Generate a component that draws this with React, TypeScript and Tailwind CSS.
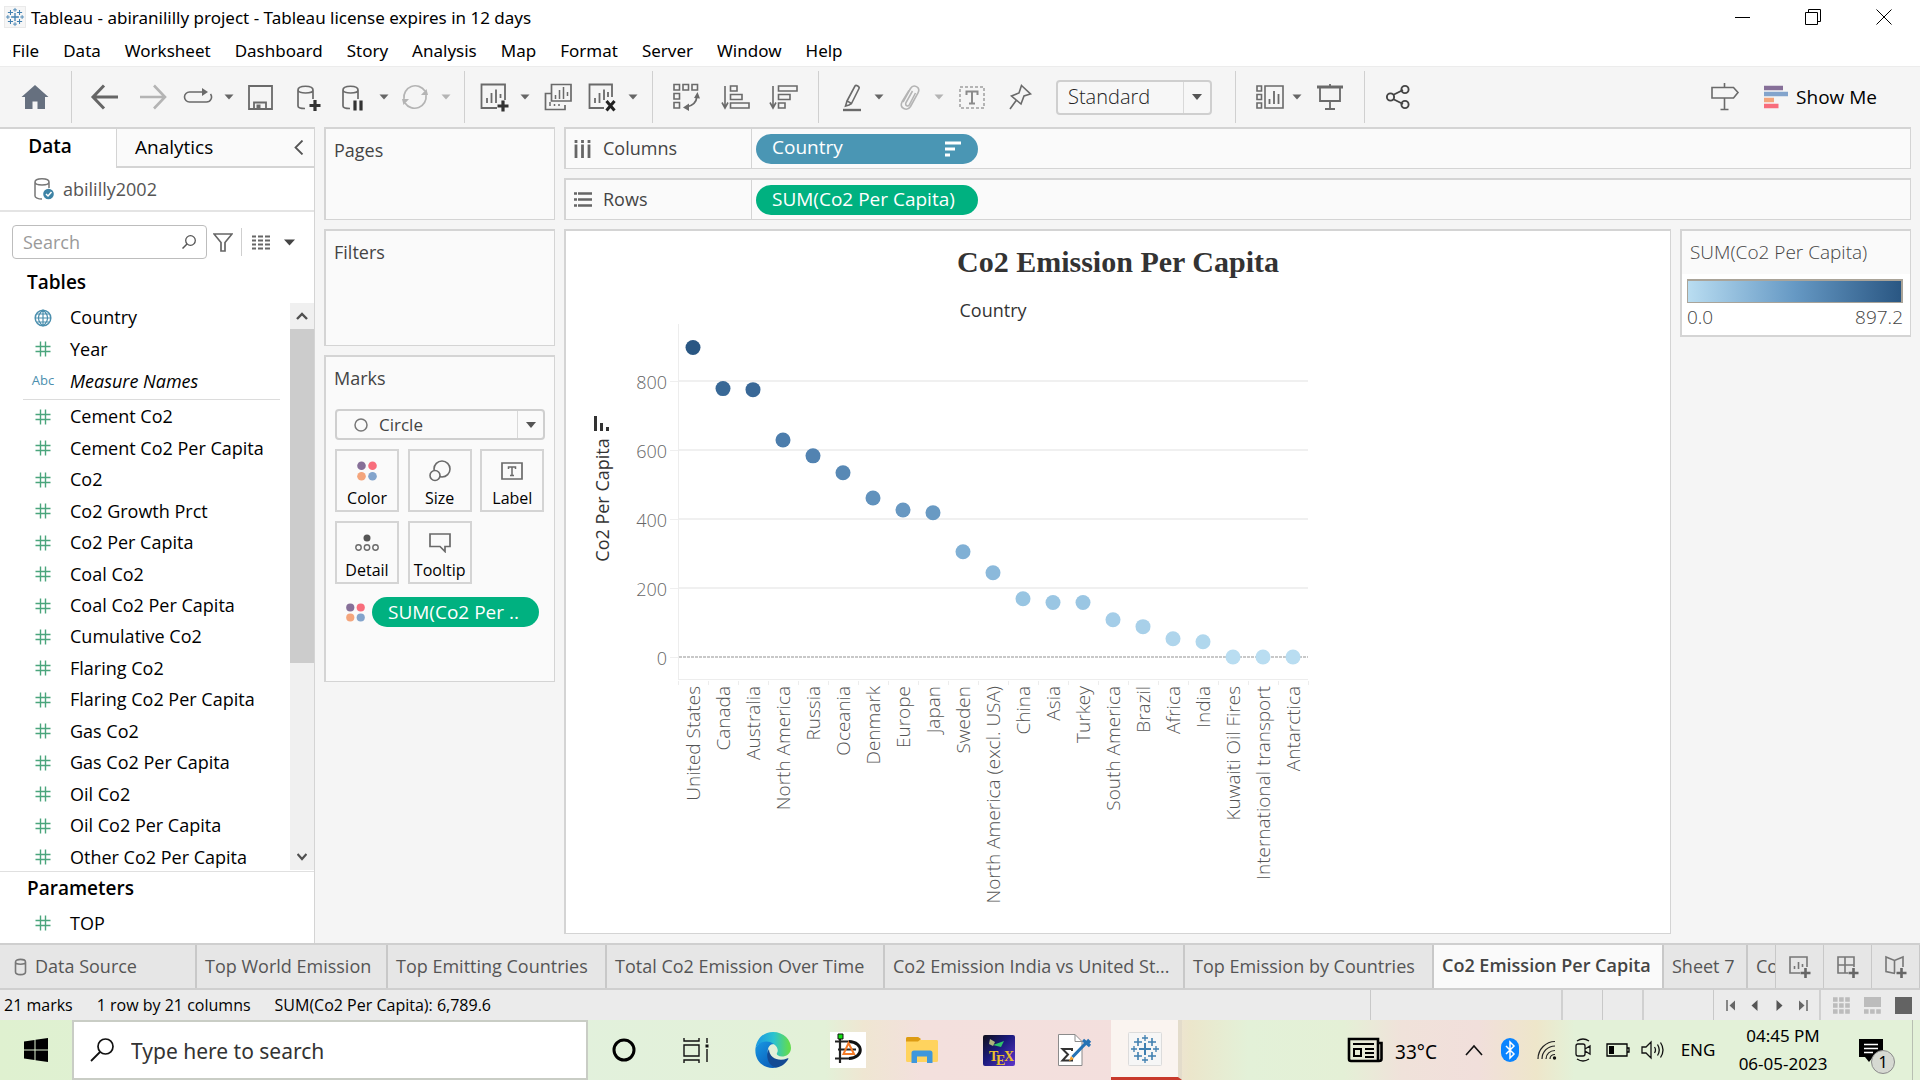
import React from "react";
import type { ReactNode } from "react";

const UI = "font-['Open_Sans','Liberation_Sans',sans-serif]";
const SYS = "font-['Noto_Sans','Liberation_Sans',sans-serif]";

function Svg({ w, h, children, className = "" }: { w: number; h: number; children: ReactNode; className?: string }) {
  return (
    <svg width={w} height={h} viewBox={`0 0 ${w} ${h}`} fill="none" aria-hidden="true" className={`shrink-0 ${className}`}>
      {children}
    </svg>
  );
}

/* ---------- Tableau logo ---------- */
function TableauMark({ size }: { size: number }) {
  const c = "#3f7fb0";
  const plus = (x: number, y: number, r: number, w: number) => (
    <path key={`${x}-${y}`} d={`M${x - r} ${y}H${x + r}M${x} ${y - r}V${y + r}`} stroke={c} strokeWidth={w} />
  );
  return (
    <svg width={size} height={size} viewBox="0 0 34 34" fill="none" aria-hidden="true" className="shrink-0">
      <rect x="0.5" y="0.5" width="33" height="33" rx="1" fill="#f6f6f6" stroke="#dcdcdc" />
      {plus(17, 17, 6, 2)}
      {plus(10, 10, 4, 1.6)}
      {plus(24, 10, 4, 1.6)}
      {plus(10, 24, 4, 1.6)}
      {plus(24, 24, 4, 1.6)}
      {plus(17, 6, 3, 1.3)}
      {plus(17, 28, 3, 1.3)}
      {plus(6, 17, 3, 1.3)}
      {plus(28, 17, 3, 1.3)}
    </svg>
  );
}

/* ---------- Title bar and menu ---------- */
function TitleBar() {
  return (
    <header className={`flex h-[34px] shrink-0 items-center bg-white ${SYS}`}>
      <div className="ml-1 mr-1">
        <TableauMark size={22} />
      </div>
      <h1 className="grow pl-px pt-0.5 text-[17px] text-black">Tableau - abiranililly project - Tableau license expires in 12 days</h1>
      <button aria-label="Minimize" className="flex h-full w-[70px] items-center justify-center">
        <Svg w={16} h={16}><path d="M0 8.5H15" stroke="#000" /></Svg>
      </button>
      <button aria-label="Restore" className="flex h-full w-[70px] items-center justify-center">
        <Svg w={16} h={16}><path d="M0.5 3.5H12.5V15.5H0.5ZM3.5 3.5V0.5H15.5V12.5H12.5" stroke="#000" /></Svg>
      </button>
      <button aria-label="Close" className="flex h-full w-[72px] items-center justify-center">
        <Svg w={16} h={16}><path d="M0.5 0.5L15.5 15.5M15.5 0.5L0.5 15.5" stroke="#000" /></Svg>
      </button>
    </header>
  );
}

const MENUS = ["File", "Data", "Worksheet", "Dashboard", "Story", "Analysis", "Map", "Format", "Server", "Window", "Help"];

function MenuBar() {
  return (
    <nav className={`flex h-8 shrink-0 items-center gap-6 bg-white px-3 pt-0.5 text-[17px] text-black ${SYS}`}>
      {MENUS.map((m) => (
        <button key={m}>{m}</button>
      ))}
    </nav>
  );
}

/* ---------- Toolbar ---------- */
const G = "#6a6a6a";
const L = "#b4b4b4";

function Tool({ label, children, className = "" }: { label: string; children: ReactNode; className?: string }) {
  return (
    <button aria-label={label} className={`flex h-[30px] w-[30px] shrink-0 items-center justify-center ${className}`}>
      <Svg w={30} h={30}>{children}</Svg>
    </button>
  );
}

function Caret({ label, light, className = "" }: { label: string; light?: boolean; className?: string }) {
  return (
    <button aria-label={label} className={`flex h-[30px] w-4 shrink-0 items-center justify-center ${className}`}>
      <Svg w={10} h={6}><path d="M0.5 0.5H9.5L5 5.5Z" fill={light ? L : "#666"} /></Svg>
    </button>
  );
}

function Sep() {
  return <div className="mx-[18px] h-[52px] w-px shrink-0 bg-[#d0d0d0]" />;
}

const cylinder = "M5 8V24C5 25.5 8 26.5 12 26.5M5 8C5 3 20 3 20 8C20 12 5 12 5 8M20 8V17";
const bars = (x: number, y: number) => `M${x} ${y + 8}V${y + 12}M${x + 4} ${y + 3}V${y + 12}M${x + 8} ${y}V${y + 12}M${x + 12} ${y + 5}V${y + 9}`;

function Toolbar() {
  return (
    <div className={`flex h-[61px] shrink-0 items-center border-t border-[#ececec] bg-[#f5f5f5] ${UI}`}>
      <Tool label="Start page" className="ml-5 mr-[3px]">
        <path d="M15 3L28.5 15H25V27H17.500V19.500H12.500V27H5V15H1.500Z" fill="#66707f" />
      </Tool>
      <Sep />
      <Tool label="Undo"><path d="M28 15H3M14 3.500L3 15L14 26.500" stroke="#666" strokeWidth="3" /></Tool>
      <Tool label="Redo" className="ml-[18px]"><path d="M2 15H27M16 3.500L27 15L16 26.500" stroke={L} strokeWidth="2.600" /></Tool>
      <Tool label="Replay" className="ml-[15px]">
        <path d="M20 10H6.500A5 5 0 0 0 6.500 20H23.500A5 5 0 0 0 27.500 12" stroke={G} strokeWidth="1.600" />
        <path d="M19 6L25 10L19 14Z" fill={G} />
      </Tool>
      <Caret label="Replay options" className="ml-2" />
      <Tool label="Save" className="ml-2">
        <path d="M4 4H27V27H4ZM9 27V20.500H21V27" stroke={G} strokeWidth="1.800" />
        <path d="M11.500 22.500H15.500V27H11.500Z" fill={G} />
      </Tool>
      <Tool label="New data source" className="ml-[18px]">
        <path d={cylinder} stroke={G} strokeWidth="1.700" />
        <path d="M22 18V29M16.500 23.500H27.500" stroke="#333" strokeWidth="3.200" />
      </Tool>
      <Tool label="Pause auto updates" className="ml-[15px]">
        <path d={cylinder} stroke={G} strokeWidth="1.700" />
        <path d="M17 18.500V28.500M23 18.500V28.500" stroke="#333" strokeWidth="3.200" />
      </Tool>
      <Caret label="Pause options" className="ml-2" />
      <Tool label="Refresh" className="ml-2">
        <path d="M4 17A11.500 11.500 0 0 1 25 9M26 13A11.500 11.500 0 0 1 5 21" stroke={L} strokeWidth="1.700" />
        <path d="M21 13H28L26.500 7ZM9 17H2L3.500 23Z" fill={L} />
      </Tool>
      <Caret label="Refresh options" light className="ml-2" />
      <div className="-ml-2"><Sep /></div>
      <Tool label="New worksheet" className="-ml-1">
        <path d="M18 26H2.500V2.500H26V18" stroke={G} strokeWidth="1.800" />
        <path d="M8 16V21M12.500 11V21M17 7.500V21M21.500 12V16" stroke={G} strokeWidth="1.800" />
        <path d="M24 18.500V29.500M18.500 24H29.500" stroke="#333" strokeWidth="3.200" />
      </Tool>
      <Caret label="New sheet options" className="ml-2" />
      <Tool label="Duplicate" className="ml-2.5">
        <path d="M8.500 2.500H28V19H8.500ZM8 11.500H2.500V27.500H22V23" stroke={G} strokeWidth="1.700" />
        <path d={bars(12.500, 5)} stroke={G} strokeWidth="1.500" />
        <path d="M7 20V24M11.500 22V24M16 22V24" stroke={G} strokeWidth="1.500" />
      </Tool>
      <Tool label="Clear sheet" className="ml-3.5">
        <path d="M17 26H2.500V2.500H25V15" stroke={G} strokeWidth="1.800" />
        <path d="M8 16V21M12.500 11V21M17 7.500V18M21 10V15" stroke={G} strokeWidth="1.800" />
        <path d="M19.500 19L27.500 28.500M27.500 19L19.500 28.500" stroke="#222" strokeWidth="3" />
      </Tool>
      <Caret label="Clear options" className="ml-2" />
      <div className="-ml-[7px]"><Sep /></div>
      <Tool label="Swap rows and columns">
        <path d="M3 2.500H8.500V8H3ZM12 2.500H17.500V8H12ZM21 2.500H26.500V8H21ZM3 11.500H8.500V17H3ZM3 20.500H8.500V26H3Z" stroke={G} strokeWidth="1.600" />
        <path d="M26 14C25.500 20 22 24 15 25" stroke={G} strokeWidth="1.800" />
        <path d="M23 16L26.500 10L29 16.500ZM18 21.500L12 25.500L18 29Z" fill={G} />
      </Tool>
      <Tool label="Sort ascending" className="ml-5">
        <path d="M4 4V25M1 20.500L4 26L7 20.500" stroke={G} strokeWidth="1.600" />
        <path d="M9.500 4H16V9H9.500ZM9.500 12.500H21V17.500H9.500ZM9.500 21H28V26H9.500Z" stroke={G} strokeWidth="1.600" />
      </Tool>
      <Tool label="Sort descending" className="ml-[18px] mr-px">
        <path d="M4 4V25M1 20.500L4 26L7 20.500" stroke={G} strokeWidth="1.600" />
        <path d="M9.500 4H28V9H9.500ZM9.500 12.500H21V17.500H9.500ZM9.500 21H16V26H9.500Z" stroke={G} strokeWidth="1.600" />
      </Tool>
      <Sep />
      <Tool label="Highlight">
        <path d="M6 28H24" stroke={G} strokeWidth="2.400" />
        <path d="M10 19L18 4C19 2.500 23 4.500 22 6.500L14.500 21.500ZM10 19L8.500 24L12 23L14.500 21.500" stroke={G} strokeWidth="1.600" />
      </Tool>
      <Caret label="Highlight options" className="ml-1" />
      <Tool label="Group members" className="ml-2">
        <path d="M8 20L15.500 6.500C18.500 1.500 26 5 23 11L15.500 24.500C12 30 4 26 7 20L14 8.500M17.500 9L11 20.500C9.500 24 13.500 25 14.500 22.500L20.500 11" stroke={L} strokeWidth="1.600" />
      </Tool>
      <Caret label="Group options" light className="ml-1.5" />
      <Tool label="Show mark labels" className="ml-2.5">
        <path d="M3 5H27V26H3Z" stroke={L} strokeWidth="2" strokeDasharray="3 2" />
        <path d="M9.500 13V9.500H20.500V13M15 9.500V21.500M12 21.500H18" stroke="#8a8a8a" strokeWidth="2" />
      </Tool>
      <Tool label="Fix axes" className="ml-[17px]">
        <path d="M17.500 3.500L26.500 12L20 14L17 22L7.500 14L15 11ZM12.500 18L6 27" stroke={G} strokeWidth="1.600" />
      </Tool>
      <div className="relative ml-[22px] h-[35px] w-[156px] shrink-0">
        <select aria-label="Fit" className="h-full w-full appearance-none rounded-sm border-2 border-[#cfcfcf] bg-[#f7f7f7] pl-2.5 text-xl font-light text-[#222]">
          <option>Standard</option>
        </select>
        <div className="pointer-events-none absolute inset-y-[2px] right-[2px] flex w-[27px] items-center justify-center border-l border-[#d9d9d9]">
          <Svg w={10} h={6}><path d="M0 0H10L5 6Z" fill="#555" /></Svg>
        </div>
      </div>
      <div className="ml-[5px]"><Sep /></div>
      <Tool label="Show cards">
        <path d="M3 4H7.500V9H3ZM3 12.500H7.500V17.500H3ZM3 21H7.500V26H3ZM11 4H29V26H11Z" stroke={G} strokeWidth="1.600" />
        <path d="M15.500 17V22M20 9V22M24.500 12V22" stroke={G} strokeWidth="1.800" />
      </Tool>
      <Caret label="Card options" className="ml-[5px]" />
      <Tool label="Presentation mode" className="ml-2.5 mr-px">
        <path d="M2 5H28" stroke={G} strokeWidth="3" />
        <path d="M5 6V19H25V6M15 19V27M10 27H20M15 2V4" stroke={G} strokeWidth="1.800" />
      </Tool>
      <Sep />
      <Tool label="Share">
        <path d="M10 13L20 8M10 17L20 22" stroke="#444" strokeWidth="1.900" />
        <circle cx="7.500" cy="15" r="3.600" stroke="#444" strokeWidth="1.900" />
        <circle cx="22" cy="7.500" r="3.600" stroke="#444" strokeWidth="1.900" />
        <circle cx="22" cy="22.500" r="3.600" stroke="#444" strokeWidth="1.900" />
      </Tool>
      <div className="grow" />
      <Tool label="Data guide">
        <path d="M2 5.500H23.500L28 10.500L23.500 16H2Z M14.500 1V5M14.500 16V27M10.500 27.500H18.500" stroke={G} strokeWidth="1.600" />
      </Tool>
      <button className="ml-6 mr-[43px] flex items-center gap-2 text-[19px] text-black">
        <Svg w={24} h={24}>
          <path d="M0 3H19" stroke="#866f98" strokeWidth="4.500" />
          <path d="M0 9H24" stroke="#83a4cc" strokeWidth="4.500" />
          <path d="M0 15H10" stroke="#f4a57c" strokeWidth="4.500" />
          <path d="M0 21H14.500" stroke="#f86d7c" strokeWidth="4.500" />
        </Svg>
        Show Me
      </button>
    </div>
  );
}

/* ---------- Data pane ---------- */
function HashIcon() {
  return <Svg w={16} h={16}><path d="M5.500 0.500V15.500M10.500 0.500V15.500M0.500 5.500H15.500M0.500 10.500H15.500" stroke="#4aa57c" strokeWidth="1.400" /></Svg>;
}
function GlobeIcon() {
  return (
    <Svg w={18} h={18}>
      <circle cx="9" cy="9" r="7.800" stroke="#4b8fae" strokeWidth="1.500" />
      <path d="M9 1V17M1 9H17M2.500 5H15.500M2.500 13H15.500M9 1C3 6 3 12 9 17M9 1C15 6 15 12 9 17" stroke="#4b8fae" strokeWidth="1.200" />
    </Svg>
  );
}

function Field({ name, kind = "hash" }: { name: string; kind?: "hash" | "globe" | "abc" }) {
  return (
    <li className="flex items-center">
      <span className="ml-6 flex w-[38px] shrink-0 justify-center">
        {kind === "hash" && <HashIcon />}
        {kind === "globe" && <GlobeIcon />}
        {kind === "abc" && <span className="text-[13px] text-[#4b8fae]">Abc</span>}
      </span>
      <span className={kind === "abc" ? "ml-2 whitespace-nowrap italic" : "ml-2 whitespace-nowrap"}>{name}</span>
    </li>
  );
}

const MEASURES = [
  "Cement Co2", "Cement Co2 Per Capita", "Co2", "Co2 Growth Prct", "Co2 Per Capita", "Coal Co2", "Coal Co2 Per Capita",
  "Cumulative Co2", "Flaring Co2", "Flaring Co2 Per Capita", "Gas Co2", "Gas Co2 Per Capita", "Oil Co2",
  "Oil Co2 Per Capita", "Other Co2 Per Capita",
];

function DataPane() {
  return (
    <aside className="flex w-[315px] shrink-0 flex-col border-r border-t-2 border-[#d4d4d4] bg-white text-[18px] text-black">
      <div className="flex h-[39px] shrink-0">
        <button className="w-[116px] shrink-0 pb-1 pr-4 text-[19px] font-semibold">Data</button>
        <div className="flex grow items-center border-b-2 border-l border-[#d4d4d4] bg-[#fafafa]">
          <button className="ml-[18px] grow text-left text-[19px]">Analytics</button>
          <button aria-label="Collapse pane" className="mr-2.5">
            <Svg w={10} h={15}><path d="M8.500 0.500L1.500 7.500L8.500 14.500" stroke="#555" strokeWidth="1.800" /></Svg>
          </button>
        </div>
      </div>
      <button className="flex h-11 shrink-0 items-center border-b-2 border-[#e4e4e4] pl-[34px] text-[#555]">
        <Svg w={22} h={24}>
          <path d="M1 5V19C1 20.500 4 22 8 22M1 5C1 0.500 15 0.500 15 5C15 9 1 9 1 5M15 5V11" stroke="#777" strokeWidth="1.500" />
          <circle cx="14.500" cy="17" r="5.300" fill="#3d83a5" />
          <path d="M12 17L14 19L17.500 15" stroke="#fff" strokeWidth="1.500" />
        </Svg>
        <span className="ml-[7px]">abililly2002</span>
      </button>
      <div className="mt-[13px] flex h-[34px] shrink-0 items-center pl-3">
        <label className="flex h-full w-[195px] items-center rounded-sm border border-[#bdbdbd] px-2.5">
          <input aria-label="Search fields" placeholder="Search" className="w-full min-w-0 outline-none placeholder:text-[#9a9a9a]" />
          <Svg w={14} h={14}>
            <circle cx="8.500" cy="5.500" r="4.800" stroke="#555" strokeWidth="1.300" />
            <path d="M5 9L0.500 13.500" stroke="#555" strokeWidth="1.500" />
          </Svg>
        </label>
        <button aria-label="Filter" className="ml-1.5">
          <Svg w={20} h={19}><path d="M1 1H19L12 9.500V18H8V9.500Z" stroke="#666" strokeWidth="1.700" /></Svg>
        </button>
        <div className="ml-2 h-7 w-px bg-[#cfcfcf]" />
        <button aria-label="View" className="ml-2.5">
          <Svg w={18} h={15}>
            <path d="M0 1.500H4M6 1.500H11M13 1.500H18M0 5.500H4M6 5.500H11M13 5.500H18M0 9.500H4M6 9.500H11M13 9.500H18M0 13.500H4M6 13.500H11M13 13.500H18" stroke="#666" strokeWidth="1.800" />
          </Svg>
        </button>
        <button aria-label="View options" className="ml-3.5">
          <Svg w={11} h={7}><path d="M0 0.500H11L5.500 6.500Z" fill="#444" /></Svg>
        </button>
      </div>
      <h2 className="mt-[9px] h-[34px] shrink-0 pl-[27px] text-[19px] font-semibold">Tables</h2>
      <div className="flex min-h-0 grow border-b border-[#e0e0e0]">
        <div className="min-w-0 grow overflow-hidden">
          <ul className="grid h-[95px] auto-rows-fr">
            <Field name="Country" kind="globe" />
            <Field name="Year" />
            <Field name="Measure Names" kind="abc" />
          </ul>
          <div className="mb-px ml-[23px] mr-2.5 mt-0.5 h-px bg-[#dcdcdc]" />
          <ul className="grid h-[472px] auto-rows-fr">
            {MEASURES.map((m) => (
              <Field key={m} name={m} />
            ))}
          </ul>
        </div>
        <div className="mb-px mt-px flex w-6 shrink-0 flex-col bg-[#f0f0f0]">
          <button aria-label="Scroll up" className="flex h-[26px] shrink-0 items-center justify-center">
            <Svg w={12} h={8}><path d="M1 7L6 2L11 7" stroke="#505050" strokeWidth="2.400" /></Svg>
          </button>
          <div className="h-[334px] shrink-0 bg-[#cccccc]" />
          <button aria-label="Scroll down" className="mt-auto flex h-[26px] shrink-0 items-center justify-center">
            <Svg w={10} h={8}><path d="M0.500 1L5 6L9.500 1" stroke="#505050" strokeWidth="2.200" /></Svg>
          </button>
        </div>
      </div>
      <h2 className="h-[31px] shrink-0 pl-[27px] pt-0.5 text-[19px] font-semibold">Parameters</h2>
      <ul className="grid h-10 shrink-0">
        <Field name="TOP" />
      </ul>
    </aside>
  );
}

/* ---------- Cards ---------- */
const CARD = "border-b border-l-2 border-r border-t-2 border-[#d4d4d4] bg-[#fafafa]";

function ColorDots({ size }: { size: number }) {
  return (
    <svg width={size} height={size} viewBox="0 0 20 20" aria-hidden="true">
      <circle cx="4.500" cy="4.700" r="4.300" fill="#866f98" />
      <circle cx="15.500" cy="4.700" r="4.300" fill="#f86d7c" />
      <circle cx="4.500" cy="15.300" r="4.300" fill="#f4a57c" />
      <circle cx="15.500" cy="15.300" r="4.300" fill="#83a4cc" />
    </svg>
  );
}

function MarkButton({ label, children }: { label: string; children: ReactNode }) {
  return (
    <button className="flex h-[63px] w-[64px] flex-col items-center justify-between border-2 border-[#d4d4d4] pt-2 text-[16px] text-black">
      <span className="flex h-6 items-center">{children}</span>
      <span>{label}</span>
    </button>
  );
}

function Cards() {
  return (
    <section className="flex w-[231px] shrink-0 flex-col gap-[9px] text-[18px] text-[#444]">
      <div className={`${CARD} h-[93px] pl-2 pt-2`}>Pages</div>
      <div className={`${CARD} h-[117px] pl-2 pt-2`}>Filters</div>
      <div className={`${CARD} h-[327px] px-[9px] pt-2`}>
        <h2 className="-ml-px">Marks</h2>
        <div className="relative mt-[17px] h-[31px]">
          <select aria-label="Mark type" className="h-full w-full appearance-none rounded-sm border-2 border-[#cfcfcf] bg-[#fafafa] pl-[42px] text-[17px] text-[#444]">
            <option>Circle</option>
          </select>
          <div className="pointer-events-none absolute inset-y-0 left-[19px] flex items-center">
            <Svg w={14} h={14}><circle cx="7" cy="7" r="6" stroke="#777" strokeWidth="1.500" /></Svg>
          </div>
          <div className="pointer-events-none absolute inset-y-[2px] right-[2px] flex w-[26px] items-center justify-center border-l border-[#d9d9d9]">
            <Svg w={10} h={6}><path d="M0 0H10L5 6Z" fill="#555" /></Svg>
          </div>
        </div>
        <div className="mt-[9px] grid grid-cols-3 gap-x-2 gap-y-[9px]">
          <MarkButton label="Color"><ColorDots size={20} /></MarkButton>
          <MarkButton label="Size">
            <Svg w={22} h={22}>
              <circle cx="13" cy="9" r="8" stroke={G} strokeWidth="1.600" />
              <circle cx="6" cy="15.500" r="5" fill="#fafafa" stroke={G} strokeWidth="1.600" />
            </Svg>
          </MarkButton>
          <MarkButton label="Label">
            <Svg w={22} h={18}>
              <path d="M1 1H21V17H1Z" stroke={G} strokeWidth="1.700" />
              <path d="M7.500 7V5H14.500V7M11 5V13.500M9 13.500H13" stroke={G} strokeWidth="1.500" />
            </Svg>
          </MarkButton>
          <MarkButton label="Detail">
            <Svg w={24} h={18}>
              <circle cx="12" cy="4" r="3.500" fill="#555" />
              <circle cx="3.500" cy="13.500" r="2.700" stroke={G} strokeWidth="1.400" />
              <circle cx="12" cy="13.500" r="2.700" stroke={G} strokeWidth="1.400" />
              <circle cx="20.500" cy="13.500" r="2.700" stroke={G} strokeWidth="1.400" />
            </Svg>
          </MarkButton>
          <MarkButton label="Tooltip">
            <Svg w={22} h={20}><path d="M1 1H21V13.500H16V18.500L11 13.500H1Z" stroke={G} strokeWidth="1.700" /></Svg>
          </MarkButton>
        </div>
        <div className="mt-[13px] flex items-center gap-[7px] pl-[11px]">
          <ColorDots size={19} />
          <button className="h-[30px] w-[167px] whitespace-nowrap rounded-full bg-[#00b180] pl-4 text-left text-[19px] leading-[28px] text-white">SUM(Co2 Per ..</button>
        </div>
      </div>
    </section>
  );
}

function Shelf({ label, icon, children }: { label: string; icon: ReactNode; children: ReactNode }) {
  return (
    <div className={`${CARD} flex h-[42px] shrink-0`}>
      <div className="flex w-[186px] items-center border-r border-[#d4d4d4] pl-2 text-[#444]">
        <span className="flex w-[29px]">{icon}</span>
        {label}
      </div>
      <div className="flex items-center pl-1">{children}</div>
    </div>
  );
}

/* ---------- Chart ---------- */
const DATA: [string, number][] = [
  ["United States", 897], ["Canada", 778], ["Australia", 775], ["North America", 629], ["Russia", 583], ["Oceania", 534],
  ["Denmark", 461], ["Europe", 426], ["Japan", 418], ["Sweden", 305], ["North America (excl. USA)", 244], ["China", 169],
  ["Asia", 158], ["Turkey", 158], ["South America", 108], ["Brazil", 88], ["Africa", 53], ["India", 44],
  ["Kuwaiti Oil Fires", 0], ["International transport", 0], ["Antarctica", 0],
];
const STOPS: [number, number, number, number][] = [
  [0, 185, 221, 241], [0.17, 155, 199, 228], [0.34, 128, 176, 213], [0.5, 99, 148, 190], [0.7, 76, 125, 172], [0.85, 58, 106, 153], [1, 42, 87, 131],
];

function ramp(t: number) {
  const i = Math.min(STOPS.findIndex((s, k) => k < STOPS.length - 1 && t <= STOPS[k + 1][0]), STOPS.length - 2);
  const a = STOPS[Math.max(i, 0)];
  const b = STOPS[Math.max(i, 0) + 1];
  const f = (t - a[0]) / (b[0] - a[0]);
  const mix = (k: number) => Math.round(a[k] + (b[k] - a[k]) * f);
  return `rgb(${mix(1)},${mix(2)},${mix(3)})`;
}

function Chart() {
  const x0 = 112;
  const y = (v: number) => 367 - (v / 200) * 69;
  const right = x0 + DATA.length * 30;
  return (
    <svg width={760} height={640} viewBox="0 0 760 640" role="img" aria-label="Co2 per capita by country" className="block">
      <text x={(x0 + right) / 2} y={27} textAnchor="middle" className="fill-[#333] text-[18px] font-medium">Country</text>
      {[200, 400, 600, 800].map((v) => (
        <line key={v} x1={x0} x2={right} y1={y(v)} y2={y(v)} stroke="#f0f0f0" strokeWidth="2" />
      ))}
      {[0, 200, 400, 600, 800].map((v) => (
        <g key={v}>
          <line x1={x0 - 8} x2={x0} y1={y(v) + 0.5} y2={y(v) + 0.5} stroke="#efefef" />
          <text x={x0 - 11} y={y(v) + 8} textAnchor="end" className="fill-[#666] text-[18px] font-light">{v}</text>
        </g>
      ))}
      <line x1={x0 + 0.5} x2={x0 + 0.5} y1={34} y2={389} stroke="#ededed" />
      <line x1={x0} x2={right} y1={389.5} y2={389.5} stroke="#ededed" />
      {Array.from({ length: DATA.length + 1 }, (_, i) => (
        <line key={i} x1={x0 + i * 30 + 0.5} x2={x0 + i * 30 + 0.5} y1={391} y2={395} stroke="#ededed" />
      ))}
      <line x1={x0 + 1} x2={right} y1={y(0)} y2={y(0)} stroke="#c8c8c8" strokeWidth="2" strokeDasharray="3 1" />
      {DATA.map(([name, v], i) => (
        <g key={name}>
          <circle cx={x0 + 15 + i * 30} cy={y(v)} r="7.500" fill={ramp(v / 897.2)} />
          <text transform={`translate(${x0 + 22 + i * 30} 396) rotate(-90)`} textAnchor="end" className="fill-[#555] text-[19px] font-light">
            {name}
          </text>
        </g>
      ))}
      <text transform="translate(43 210) rotate(-90)" textAnchor="middle" className="fill-[#333] text-[18px] font-medium">Co2 Per Capita</text>
      <path d="M28 126H31V141H28ZM34 133H37V141H34ZM40 137H43V141H40Z" fill="#333" />
    </svg>
  );
}

function Legend() {
  return (
    <aside className="h-[108px] w-[231px] shrink-0 border-2 border-r border-[#d4d4d4] bg-white text-[#444]">
      <h2 className="h-[43px] whitespace-nowrap bg-[#fafafa] pl-2 pt-[7px] text-[19px] font-light">SUM(Co2 Per Capita)</h2>
      <div className="px-[5px] pt-[5px]">
        <div className="h-6 w-[216px] border-b border-l border-r-2 border-t-2 border-[#aaa499] bg-gradient-to-r from-[#b9ddf1] via-[#6699c4] to-[#2a5783]" />
        <div className="flex w-[216px] justify-between text-[19px] font-light">
          <span>0.0</span>
          <span>897.2</span>
        </div>
      </div>
    </aside>
  );
}

function Workspace() {
  return (
    <main className="flex min-h-0 grow gap-[9px] bg-[#f5f5f5]">
      <DataPane />
      <Cards />
      <section className="mb-[9px] mr-[9px] flex min-w-0 grow flex-col gap-[9px] text-[18px]">
        <Shelf label="Columns" icon={<Svg w={17} h={18}><path d="M2 0V18M8.500 0V18M15 0V18" stroke="#666" strokeWidth="2.800" strokeDasharray="3 1.500 14" /></Svg>}>
          <button className="flex h-[30px] w-[222px] items-center justify-between rounded-full bg-[#4a96b4] pl-4 pr-[17px] text-[19px] text-white">
            <span className="pb-0.5">Country</span>
            <Svg w={16} h={16}><path d="M0 2H16M0 8H10M0 14H5" stroke="#fff" strokeWidth="2.800" /></Svg>
          </button>
        </Shelf>
        <Shelf label="Rows" icon={<Svg w={18} h={15}><path d="M0 1.500H18M0 7.500H18M0 13.500H18" stroke="#666" strokeWidth="2.600" strokeDasharray="3 1 14 9" /></Svg>}>
          <button className="h-[30px] w-[222px] rounded-full bg-[#00b180] pb-0.5 pl-4 text-left text-[19px] leading-[28px] text-white">SUM(Co2 Per Capita)</button>
        </Shelf>
        <div className="flex min-h-0 grow gap-[9px]">
          <div className="min-w-0 grow overflow-hidden border-b border-l-2 border-r border-t-2 border-[#d4d4d4] bg-white">
            <h1 className="flex h-[59px] items-center justify-center pt-0.5 font-['Liberation_Serif',serif] text-[30px] font-bold text-[#333]">
              Co2 Emission Per Capita
            </h1>
            <Chart />
          </div>
          <Legend />
        </div>
      </section>
    </main>
  );
}

/* ---------- Sheet tabs ---------- */
const TABS: [string, string][] = [
  ["Top World Emission", "w-[191px]"],
  ["Top Emitting Countries", "w-[219px]"],
  ["Total Co2 Emission Over Time", "w-[278px]"],
  ["Co2 Emission India vs United St...", "w-[300px]"],
  ["Top Emission by Countries", "w-[249px]"],
];
const TAB = "flex h-full shrink-0 items-center overflow-hidden whitespace-nowrap border-r-2 border-[#c8c8c8] pl-2";

function SheetTabs() {
  return (
    <div className="flex h-[47px] shrink-0 border-b-2 border-t-2 border-[#cfcfcf] bg-[#e6e6e6] text-[18px] text-[#555]">
      <button className={`${TAB} w-[197px] gap-2 !pl-3.5`}>
        <Svg w={13} h={18}><path d="M1.500 4V14C1.500 17.500 11.500 17.500 11.500 14V4C11.500 0.500 1.500 0.500 1.500 4C1.500 7 11.500 7 11.500 4" stroke="#777" strokeWidth="1.600" /></Svg>
        Data Source
      </button>
      {TABS.map(([t, w]) => (
        <button key={t} className={`${TAB} ${w}`}>{t}</button>
      ))}
      <button className={`${TAB} w-[230px] bg-[#fafafa] pb-0.5 font-semibold text-[#444]`}>Co2 Emission Per Capita</button>
      <button className={`${TAB} w-[84px]`}>Sheet 7</button>
      <button className="flex min-w-0 grow items-center overflow-hidden whitespace-nowrap border-r border-[#c8c8c8] pl-2">Co</button>
      <button aria-label="New worksheet" className="flex w-12 shrink-0 items-center justify-center border-r border-[#c8c8c8]">
        <Svg w={24} h={24}>
          <path d="M12 18H2V2H19V12M6.500 11V14M10.500 7V14M14.500 9V12" stroke="#777" strokeWidth="1.600" />
          <path d="M17.500 13V23M12.500 18H22.500" stroke="#666" strokeWidth="2.600" />
        </Svg>
      </button>
      <button aria-label="New dashboard" className="flex w-12 shrink-0 items-center justify-center border-r border-[#c8c8c8]">
        <Svg w={24} h={24}>
          <path d="M12 18H2V2H18V12M2 10H18M9 2V18" stroke="#777" strokeWidth="1.600" />
          <path d="M17.500 13V23M12.500 18H22.500" stroke="#666" strokeWidth="2.600" />
        </Svg>
      </button>
      <button aria-label="New story" className="flex w-12 shrink-0 items-center justify-center border-r border-[#c8c8c8]">
        <Svg w={24} h={24}>
          <path d="M11 18.500L2 16.500V2L10.500 5.500L19 2V12M10.500 5.500V18" stroke="#777" strokeWidth="1.600" />
          <path d="M17.500 13V23M12.500 18H22.500" stroke="#666" strokeWidth="2.600" />
        </Svg>
      </button>
    </div>
  );
}

function StatusBar() {
  return (
    <div className="flex h-[30px] shrink-0 items-center bg-[#ebebeb] pl-1 text-[16px] text-black">
      <div className="flex gap-6">
        <span>21 marks</span>
        <span>1 row by 21 columns</span>
        <span>SUM(Co2 Per Capita): 6,789.6</span>
      </div>
      <div className="ml-auto h-full w-[191px] border-l border-[#c8c8c8]" />
      <div className="h-full w-[41px] border-l-2 border-[#d0d0d0]" />
      <div className="h-full w-10 border-l border-[#c8c8c8]" />
      <div className="h-full w-[71px] border-l-2 border-[#d0d0d0]" />
      <div className="flex h-full w-[106px] items-center justify-center gap-3.5 border-l border-[#c8c8c8]">
        <button aria-label="First sheet"><Svg w={10} h={11}><path d="M1 0V11" stroke="#666" strokeWidth="1.500" /><path d="M9 0.500V10.500L3.500 5.500Z" fill="#666" /></Svg></button>
        <button aria-label="Previous sheet"><Svg w={10} h={11}><path d="M7.500 0V11L1.500 5.500Z" fill="#555" /></Svg></button>
        <button aria-label="Next sheet"><Svg w={10} h={11}><path d="M2.500 0V11L8.500 5.500Z" fill="#555" /></Svg></button>
        <button aria-label="Last sheet"><Svg w={10} h={11}><path d="M9 0V11" stroke="#666" strokeWidth="1.500" /><path d="M1 0.500V10.500L6.500 5.500Z" fill="#666" /></Svg></button>
      </div>
      <div className="flex h-full w-[101px] items-center gap-3.5 border-l-2 border-[#d0d0d0] pl-3">
        <button aria-label="Show sheet sorter"><Svg w={17} h={17}><path d="M0 2.500H17M0 8.500H17M0 14.500H17" stroke="#bcbcbc" strokeWidth="4.400" strokeDasharray="4.600 1.500" /></Svg></button>
        <button aria-label="Show filmstrip"><Svg w={17} h={17}><path d="M0 0H17V10H0Z" fill="#bcbcbc" /><path d="M0 14.500H17" stroke="#bcbcbc" strokeWidth="4.400" strokeDasharray="4.600 1.500" /></Svg></button>
        <button aria-label="Show tabs"><Svg w={17} h={17}><path d="M0 0H17V17H0Z" fill="#636363" /></Svg></button>
      </div>
    </div>
  );
}

/* ---------- Taskbar ---------- */
function App36({ label, children, className = "" }: { label: string; children: ReactNode; className?: string }) {
  return (
    <button aria-label={label} className={`flex h-full w-[75px] shrink-0 items-center justify-center ${className}`}>
      <svg width={36} height={36} viewBox="0 0 36 36" fill="none" aria-hidden="true">{children}</svg>
    </button>
  );
}

function Taskbar() {
  return (
    <footer
      className={`flex h-[60px] shrink-0 items-center bg-[linear-gradient(90deg,#dff1d0_0%,#e2f1dc_30%,#e3f1d8_43%,#efe6d2_45%,#f3e0dd_48%,#f3dfdd_60%,#ebe6cb_62%,#e3f1d8_65%,#e4f0d6_70%,#f0e2da_73%,#f1dfdb_77%,#eee6ca_80%,#e3f1d8_82%,#e3f1d8_100%)] ${SYS}`}
    >
      <button aria-label="Start" className="flex h-full w-[72px] shrink-0 items-center justify-center">
        <Svg w={24} h={24}><path d="M0 3.500L10.500 2V11.500H0ZM11.500 1.800L24 0V11.500H11.500ZM0 12.500H10.500V22L0 20.500ZM11.500 12.500H24V24L11.500 22.200Z" fill="#000" /></Svg>
      </button>
      <label className="flex h-full w-[516px] shrink-0 items-center border-2 border-[#c9cdc5] bg-white pl-4">
        <Svg w={24} h={24}>
          <circle cx="15.500" cy="8.500" r="7.500" stroke="#111" strokeWidth="1.700" />
          <path d="M10 14L1 23" stroke="#111" strokeWidth="1.800" />
        </Svg>
        <input aria-label="Type here to search" placeholder="Type here to search" className="ml-[17px] w-full min-w-0 pt-1 text-[21px] outline-none placeholder:text-[#333]" />
      </label>
      <App36 label="Cortana" className="!w-[72px]"><circle cx="18" cy="18" r="10" stroke="#000" strokeWidth="3" /></App36>
      <App36 label="Task view" className="!w-[72px]">
        <path d="M6 6V9H21V6M6 13H21V24H6ZM6 31V28H21V31" stroke="#111" strokeWidth="1.400" />
        <path d="M29 6V11M29 17V30" stroke="#111" strokeWidth="1.400" />
        <path d="M27.500 12.500H30.500V15.500H27.500Z" fill="#111" />
      </App36>
      <App36 label="Microsoft Edge" className="!w-[81px]">
        <defs>
          <linearGradient id="edgeTop" x1="4" y1="14" x2="34" y2="14" gradientUnits="userSpaceOnUse">
            <stop stopColor="#1d9fe0" /><stop offset="0.500" stopColor="#2cc3cf" /><stop offset="1" stopColor="#62dc4f" />
          </linearGradient>
          <linearGradient id="edgeLow" x1="2" y1="14" x2="20" y2="34" gradientUnits="userSpaceOnUse">
            <stop stopColor="#1690dd" /><stop offset="1" stopColor="#0a5cb8" />
          </linearGradient>
        </defs>
        <path d="M0.500 16C2 6 9 0 18 0C29 0 36 8 36 16C36 22 31 24.500 27 24.500C23 24.500 21 22.500 22 21C24 18 22 12.500 15.500 11C8 9.500 2 12 0.500 16Z" fill="url(#edgeTop)" />
        <path d="M0.500 16C3 10 12 7 19 12C14 12 12 17 13 22C14 28 19 34 22 35.500C9 38 -1 29 0.500 16Z" fill="url(#edgeLow)" />
        <path d="M14 17C10 23 13 35 22 35.500C27 34.500 31 31 33 27.500C34 26 33 26 32 26.500C24 30 14 26 14 17Z" fill="#134a93" />
      </App36>
      <App36 label="Drawing editor" className="!w-[70px]">
        <path d="M0 0H36V36H0Z" fill="#fff" />
        <path d="M10 6V31M5 9.500H20M5 26.500H20M8 17.500H26" stroke="#222" strokeWidth="2.200" />
        <path d="M19 9.500C34 10 34 26 19 26.500" stroke="#111" strokeWidth="3" />
        <path d="M18.500 11L24 22H13.500Z" stroke="#f57c28" strokeWidth="2" />
        <path d="M8 2H13V7H8Z" fill="#12e012" stroke="#111" />
      </App36>
      <App36 label="File Explorer" className="!w-[78px]">
        <path d="M2 6.500Q2 5 3.500 5H14L17 8H33Q34 8 34 9.500V28.500Q34 30 32.500 30H3.500Q2 30 2 28.500Z" fill="#ffd35e" />
        <path d="M2 6.500Q2 5 3.500 5H14L17 7L14 9.500H2Z" fill="#dd9b13" />
        <path d="M7.500 31V21Q7.500 18.500 10 18.500H26Q28.500 18.500 28.500 21V31H23V24.500H13V31Z" fill="#3e97dc" />
      </App36>
      <App36 label="TeX editor" className="!w-[75px]">
        <defs>
          <linearGradient id="texBg" x1="3" y1="3" x2="33" y2="33" gradientUnits="userSpaceOnUse">
            <stop stopColor="#10101c" /><stop offset="0.450" stopColor="#1a1a7c" /><stop offset="1" stopColor="#5a35c8" />
          </linearGradient>
        </defs>
        <rect x="2" y="3" width="32" height="31" rx="2" fill="url(#texBg)" />
        <path d="M12 13L23 9L20 15Z" fill="#2fc46a" />
        <path d="M9 7L14 10L12 14L8 12Z" fill="#aeb57c" />
        <g className="fill-[#e9bf2e] font-['Liberation_Serif',serif] text-[14px] font-bold">
          <text x="8" y="29">T</text><text x="15" y="33">E</text><text x="23" y="29">X</text>
        </g>
      </App36>
      <App36 label="Equation editor">
        <path d="M2.500 2.500H19L26 9.500V33.500H2.500Z" fill="#fff" stroke="#8b8b8b" />
        <path d="M19 2.500V9.500H26" stroke="#8b8b8b" />
        <path d="M16 19V17H6.500L12 22.500L6.500 28.500H16V26" stroke="#333" strokeWidth="2" />
        <path d="M13 29L15 24L18 27Z" fill="#f0a030" />
        <path d="M16.500 25L30 11M27 8L34 14M31 8L34 11" stroke="#2572b4" strokeWidth="3.200" />
      </App36>
      <button aria-label="Tableau" className="flex h-full w-[71px] shrink-0 items-center justify-center border-b-[3px] border-r-4 border-b-[#c8392b] border-r-[#e3dccb] bg-[#faf4f0]">
        <TableauMark size={34} />
      </button>
      <div className="grow" />
      <button className="flex shrink-0 items-center gap-3 text-[19px] text-black">
        <Svg w={36} h={26}>
          <path d="M2 2H31V24H4Q2 24 2 22ZM31 6H34.500V22Q34.500 24 32 24H28" stroke="#000" strokeWidth="2.600" />
          <path d="M6 7H27M18 12H27M18 16H27M18 20H27" stroke="#000" strokeWidth="1.900" />
          <path d="M7 12H14V19H7Z" stroke="#000" strokeWidth="2" />
        </Svg>
        <span className="pt-1">33°C</span>
      </button>
      <div className="ml-7 flex shrink-0 items-center text-black">
        <button aria-label="Show hidden icons"><Svg w={18} h={12}><path d="M1 11L9 2L17 11" stroke="#111" strokeWidth="1.600" /></Svg></button>
        <button aria-label="Bluetooth" className="ml-[18px]">
          <Svg w={18} h={24}><rect width="18" height="24" rx="9" fill="#0a84ff" /><path d="M5 8L13 16L9 20V4L13 8L5 16" stroke="#fff" strokeWidth="1.500" /></Svg>
        </button>
        <button aria-label="Network" className="ml-[18px]">
          <Svg w={20} h={20}>
            <path d="M1 19C1 9 9 1.500 18 1.500M5 19C5 11.500 11 6 18 6M9 19C9 14 13 10.500 18 10.500M13 19C13 16.500 15 14.500 18 14.500" stroke="#222" strokeWidth="1.200" />
            <circle cx="17.500" cy="18" r="1.700" fill="#111" />
          </Svg>
        </button>
        <button aria-label="Meet now" className="ml-[17px]">
          <Svg w={18} h={24}>
            <path d="M4 6H9Q11 6 11 8V16Q11 18 9 18H4Q2 18 2 16V8Q2 6 4 6ZM11 11L16 8V16L11 13M3 3Q9 -1 15 3M3 21Q9 25 15 21" stroke="#111" strokeWidth="1.300" />
          </Svg>
        </button>
        <button aria-label="Battery" className="ml-3.5">
          <Svg w={24} h={14}><path d="M1 1H21V13H1ZM21 5H23V9H21" stroke="#000" strokeWidth="1.300" /><path d="M3 3H8V11H3Z" fill="#000" /></Svg>
        </button>
        <button aria-label="Volume" className="ml-[11px]">
          <Svg w={24} h={20}><path d="M1 7H5L10 2V18L5 13H1ZM13.500 7Q15.500 10 13.500 13M16.500 4.500Q20 10 16.500 15.500M19.500 2.500Q24.500 10 19.500 17.500" stroke="#111" strokeWidth="1.300" /></Svg>
        </button>
        <button className="ml-[15px] w-9 text-[17px]">ENG</button>
        <button className="ml-[15px] w-[104px] text-[17px] leading-[28px]">
          <span className="block">04:45 PM</span>
          <span className="block whitespace-nowrap">06-05-2023</span>
        </button>
        <button aria-label="1 new notification" className="relative ml-6 mr-[17px] h-10 w-9">
          <Svg w={24} h={24} className="mt-0.5"><path d="M0 0H24V18H14L10 23L6 18H0Z" fill="#000" /><path d="M5 5.500H19M5 9.500H19M5 13.500H14" stroke="#fff" strokeWidth="1.400" /></Svg>
          <span className="absolute -bottom-1 right-0 flex h-6 w-6 items-center justify-center rounded-full border border-[#8b8b8b] bg-[#d6d9d2] text-base">1</span>
        </button>
        <div className="mr-[7px] h-[60px] w-px bg-[#b8bfb2]" />
      </div>
    </footer>
  );
}

export default function App() {
  return (
    <div className={`flex h-screen flex-col overflow-hidden bg-[#f5f5f5] ${UI}`}>
      <TitleBar />
      <MenuBar />
      <Toolbar />
      <Workspace />
      <SheetTabs />
      <StatusBar />
      <Taskbar />
    </div>
  );
}
